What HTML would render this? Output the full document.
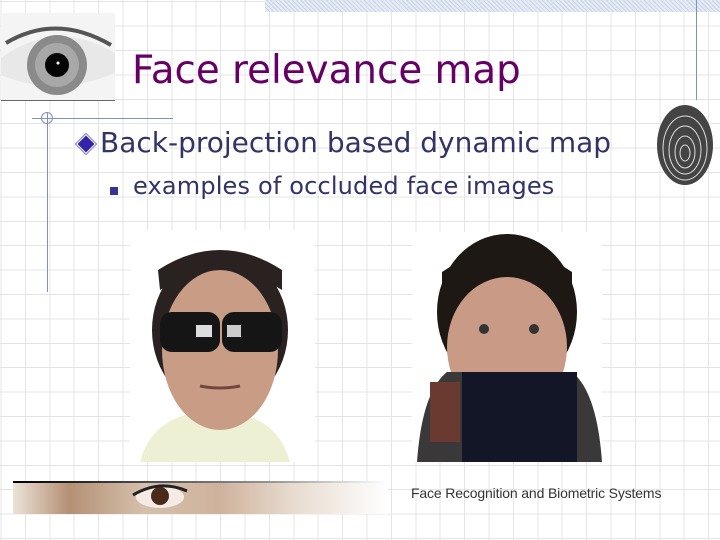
<!DOCTYPE html>
<html><head><style>
body{margin:0;width:720px;height:540px;overflow:hidden;position:relative;font-family:"DejaVu Sans","Liberation Sans",sans-serif;
background-color:#fff;
background-image:repeating-linear-gradient(90deg,transparent 0 0.5px,#e4e4e4 0.5px 1.5px,transparent 1.5px 24.4px),repeating-linear-gradient(0deg,transparent 0 1px,#e4e4e4 1px 2px,transparent 2px 24.4px);
}
.abs{position:absolute}
</style></head><body>
<div class="abs" style="left:265px;top:0;width:455px;height:12px;background:repeating-linear-gradient(45deg,#c8d2e6 0 1px,#e6ecf6 1px 3px)"></div>
<div class="abs" style="left:696px;top:0;width:1px;height:100px;background:#8090c0"></div>
<svg class="abs" style="left:1px;top:13px" width="114" height="88">
<rect width="114" height="88" fill="#f4f4f4"/>
<path d="M0 45 Q55 5 114 40 L114 60 Q55 85 0 62Z" fill="#e8e8e8"/>
<path d="M5 30 Q55 0 110 32" stroke="#555" stroke-width="4" fill="none"/>
<circle cx="56" cy="52" r="30" fill="#8a8a8a"/>
<circle cx="56" cy="52" r="22" fill="#a8a8a8"/>
<circle cx="56" cy="52" r="12" fill="#050505"/>
<circle cx="57" cy="50" r="1.5" fill="#fff"/>
<line x1="0" y1="87.5" x2="114" y2="87.5" stroke="#666"/>
</svg>
<div class="abs" style="left:32px;top:118px;width:141px;height:1px;background:#8090c0"></div>
<div class="abs" style="left:47px;top:112px;width:1px;height:180px;background:#8090c0"></div>
<div class="abs" style="left:41px;top:112px;width:12px;height:12px;border:1px solid #8090c0;border-radius:50%;box-sizing:border-box"></div>
<div class="abs" style="left:132px;top:52px;font-size:38.8px;color:#660066;line-height:1">Face relevance map</div>
<div class="abs" style="left:79px;top:137px;width:12px;height:12px;background:#3322aa;transform:rotate(45deg);border:1px solid #fff;outline:1px solid #8888cc"></div>
<div class="abs" style="left:100px;top:128px;font-size:28px;color:#333366;line-height:1.1">Back-projection based dynamic map</div>
<div class="abs" style="left:110px;top:187px;width:8px;height:8px;background:#333399"></div>
<div class="abs" style="left:133px;top:173px;font-size:24px;color:#333366;line-height:1.1;letter-spacing:0.17px">examples of occluded face images</div>
<svg class="abs" style="left:655px;top:103px" width="60" height="84">
<ellipse cx="30" cy="42" rx="28" ry="40" fill="#444"/>
<g stroke="#ddd" stroke-width="1" fill="none">
<ellipse cx="30" cy="45" rx="22" ry="32"/><ellipse cx="30" cy="47" rx="16" ry="24"/><ellipse cx="30" cy="49" rx="10" ry="16"/><ellipse cx="30" cy="50" rx="5" ry="8"/>
</g></svg>
<svg class="abs" style="left:130px;top:230px" width="185" height="232">
<rect width="185" height="232" fill="#fff"/>
<path d="M10 232 Q20 195 55 185 L115 185 Q150 195 160 232Z" fill="#eef0d4"/>
<ellipse cx="90" cy="100" rx="68" ry="78" fill="#2a2220"/>
<ellipse cx="90" cy="120" rx="58" ry="80" fill="#c99c86"/>
<path d="M30 60 Q90 20 152 60 L152 40 Q90 0 28 40Z" fill="#2a2220"/>
<rect x="30" y="82" width="60" height="40" rx="12" fill="#151515"/>
<rect x="92" y="82" width="60" height="40" rx="12" fill="#151515"/>
<rect x="66" y="95" width="16" height="12" fill="#ddd"/><rect x="97" y="95" width="14" height="12" fill="#ccc"/>
<path d="M70 156 Q90 160 110 156" stroke="#704840" stroke-width="3" fill="none"/>
</svg>
<svg class="abs" style="left:412px;top:232px" width="190" height="230">
<rect width="190" height="230" fill="#fff"/>
<ellipse cx="95" cy="80" rx="70" ry="78" fill="#1e1814"/>
<ellipse cx="95" cy="115" rx="60" ry="70" fill="#c99a86"/>
<path d="M30 60 Q95 10 160 60 L160 40 Q95 -5 30 40Z" fill="#1e1814"/>
<circle cx="72" cy="97" r="5" fill="#333"/><circle cx="122" cy="97" r="5" fill="#333"/>
<path d="M5 230 Q10 160 35 140 L160 140 Q185 160 190 230Z" fill="#3a3838"/>
<rect x="50" y="140" width="115" height="90" fill="#121626"/>
<rect x="18" y="150" width="30" height="60" fill="#6a3a30"/>
</svg>
<div class="abs" style="left:13px;top:481px;width:375px;height:2px;background:linear-gradient(90deg,#000,#999 70%,#fff)"></div>
<div class="abs" style="left:13px;top:483px;width:375px;height:31px;background:linear-gradient(90deg,#ebe2d8,#b49074 15%,#d5c0ac 35%,#cfb29c 55%,#e8dcd0 75%,#fff)"></div>
<svg class="abs" style="left:125px;top:483px" width="70" height="31"><ellipse cx="35" cy="14" rx="24" ry="11" fill="#f4ece4"/><circle cx="35" cy="13" r="9" fill="#4a2a1a"/><path d="M8 12 Q35 -4 62 8" stroke="#222" stroke-width="3" fill="none"/></svg>
<div class="abs" style="left:411px;top:485px;font-size:14px;color:#333;font-family:'Liberation Sans',sans-serif;letter-spacing:-0.15px">Face Recognition and Biometric Systems</div>
</body></html>
